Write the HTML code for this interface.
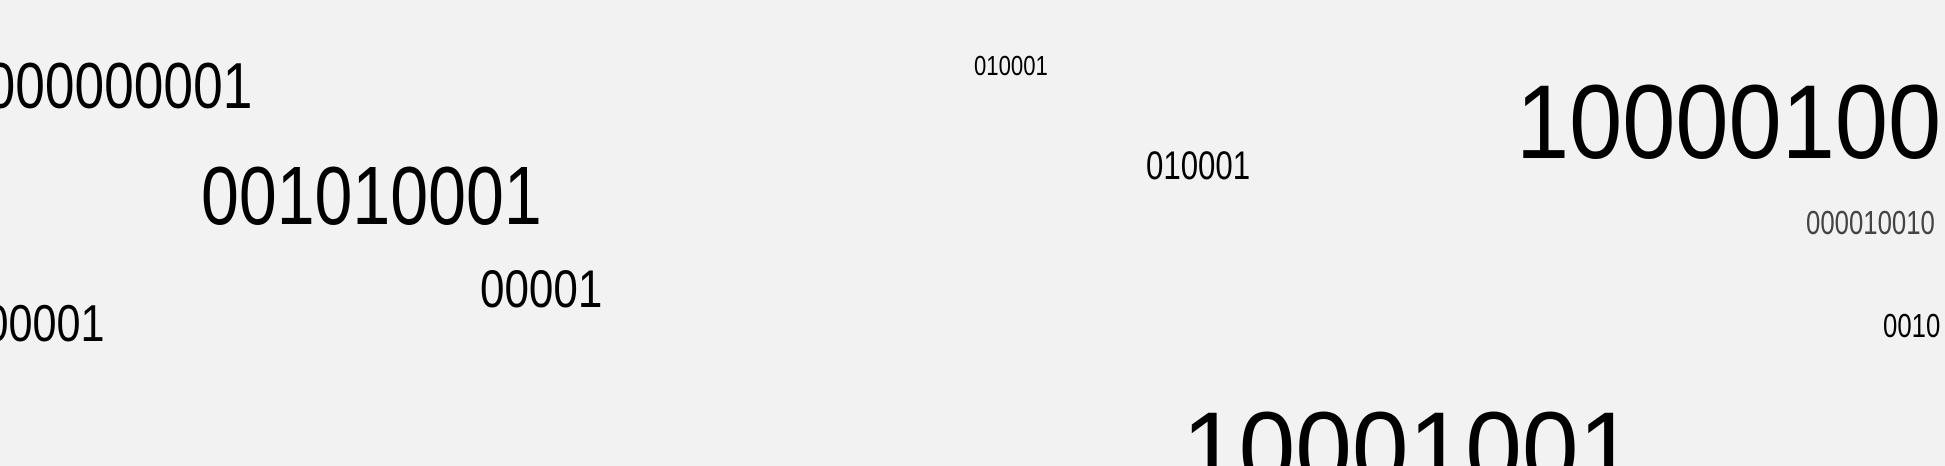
<!DOCTYPE html>
<html style="overflow:hidden;height:466px;"><head><meta charset="utf-8"><style>
html,body{margin:0;padding:0;}
body{width:1945px;height:466px;background:#f2f2f2;position:relative;overflow:hidden;font-family:"Liberation Sans",sans-serif;color:#000;}
.t{position:absolute;line-height:1;white-space:nowrap;transform-origin:left top;}
.r{transform-origin:right top;}
</style></head><body>
<div class="t r" style="right:1693px;top:53px;font-size:65px;transform:scaleX(0.82);">000000001</div>
<div class="t" style="left:201px;top:154px;font-size:83px;transform:scaleX(0.82);">001010001</div>
<div class="t" style="left:480px;top:263px;font-size:53px;transform:scaleX(0.83);">00001</div>
<div class="t r" style="right:1840px;top:298px;font-size:52px;transform:scaleX(0.83);">000001</div>
<div class="t" style="left:974px;top:52px;font-size:28px;transform:scaleX(0.79);">010001</div>
<div class="t" style="left:1146px;top:146px;font-size:40px;transform:scaleX(0.78);">010001</div>
<div class="t" style="left:1516px;top:70px;font-size:105px;transform:scaleX(0.91);">10000100</div>
<div class="t" style="left:1806px;top:206px;font-size:33px;transform:scaleX(0.78);color:#444;">000010010</div>
<div class="t" style="left:1883px;top:309px;font-size:33px;transform:scaleX(0.78);">0010</div>
<div class="t" style="left:1182px;top:397px;font-size:105px;height:69px;overflow:hidden;transform:scaleX(0.97);">10001001</div>
</body></html>
